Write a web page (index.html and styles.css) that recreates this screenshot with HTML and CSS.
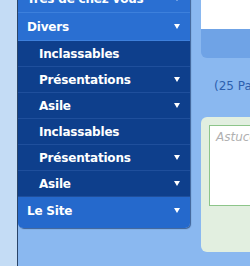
FILE: index.html
```html
<!DOCTYPE html>
<html lang="fr">
<head>
<meta charset="UTF-8">
<title>Forum</title>
<link rel="stylesheet" href="styles.css">
</head>
<body>

<div class="rail"></div>

<!-- Side menu -->
<div class="side">
  <ul class="menu">
    <li class="item cut">Très de chez vous <span class="arrow"></span></li>
    <li class="item">Divers <span class="arrow"></span></li>
    <li class="sub">Inclassables</li>
    <li class="sub">Présentations <span class="arrow"></span></li>
    <li class="sub">Asile <span class="arrow"></span></li>
    <li class="sub">Inclassables</li>
    <li class="sub">Présentations <span class="arrow"></span></li>
    <li class="sub">Asile <span class="arrow"></span></li>
    <li class="item last">Le Site <span class="arrow"></span></li>
  </ul>
</div>

<!-- Content -->
<div class="main">
  <div class="head-box"></div>
  <div class="head-bar"></div>
  <p class="count">(25 Pages)</p>
  <div class="tip">
    <textarea class="tip-input" placeholder="Astuce : ajoutez un message"></textarea>
  </div>
</div>

</body>
</html>
```

FILE: styles.css
```css
body {
  margin: 0;
  padding: 0;
  display: flex;
  align-items: flex-start;
  height: 266px;
  overflow: hidden;
  background-color: #8ab8f0;
  font-family: "DejaVu Sans", Verdana, sans-serif;
}
.rail {
  flex: 0 0 17px;
  height: 100%;
  background-color: #c4dcf5;
  border-right: 1px solid #2a4468;
}
.side {
  flex: 0 0 172px;
}
.menu {
  list-style: none;
  margin: -15px 0 0 0;
  padding: 0;
  border-radius: 0 0 5px 5px;
  box-shadow: 1px 1px 1px rgba(10, 40, 90, 0.6);
}
.menu li {
  display: flex;
  align-items: center;
  justify-content: space-between;
  color: #fff;
  font-size: 12px;
  font-weight: bold;
  letter-spacing: -0.2px;
}
.item {
  height: 27px;
  padding: 0 10px 0 9px;
  background-color: #2a6fd2;
  border-bottom: 1px solid #3d80dc;
}
.sub {
  height: 25px;
  padding: 0 10px 0 21px;
  background-color: #0e3f8c;
  border-bottom: 1px solid #1f4f9c;
}
.menu .last {
  height: 27px;
  padding-bottom: 4px;
  border-bottom: none;
  border-radius: 0 0 5px 5px;
  background-color: #2569cc;
}
.arrow {
  width: 0;
  height: 0;
  border-left: 3.5px solid transparent;
  border-right: 3.5px solid transparent;
  border-top: 5px solid #fff;
}
.main {
  flex: 0 0 300px;
  margin-left: 11px;
}
.head-box {
  height: 29px;
  background-color: #fff;
}
.head-bar {
  height: 29px;
  background-color: #6fa3e6;
  border-radius: 0 0 0 6px;
}
.count {
  margin: 21px 0 0 13px;
  height: 16px;
  font-size: 12px;
  color: #2d5fae;
  white-space: nowrap;
}
.tip {
  margin-top: 22px;
  height: 119px;
  padding: 8px;
  background-color: #e2efe0;
  border-radius: 6px;
}
.tip-input {
  display: block;
  box-sizing: border-box;
  width: 100%;
  height: 81px;
  margin: 0;
  padding: 4px 6px;
  border: 1px solid #8dc58a;
  background-color: #fff;
  resize: none;
  font-family: "DejaVu Sans", Verdana, sans-serif;
  font-size: 12px;
}
.tip-input::placeholder {
  color: #b0b0b0;
  font-style: italic;
}
```
